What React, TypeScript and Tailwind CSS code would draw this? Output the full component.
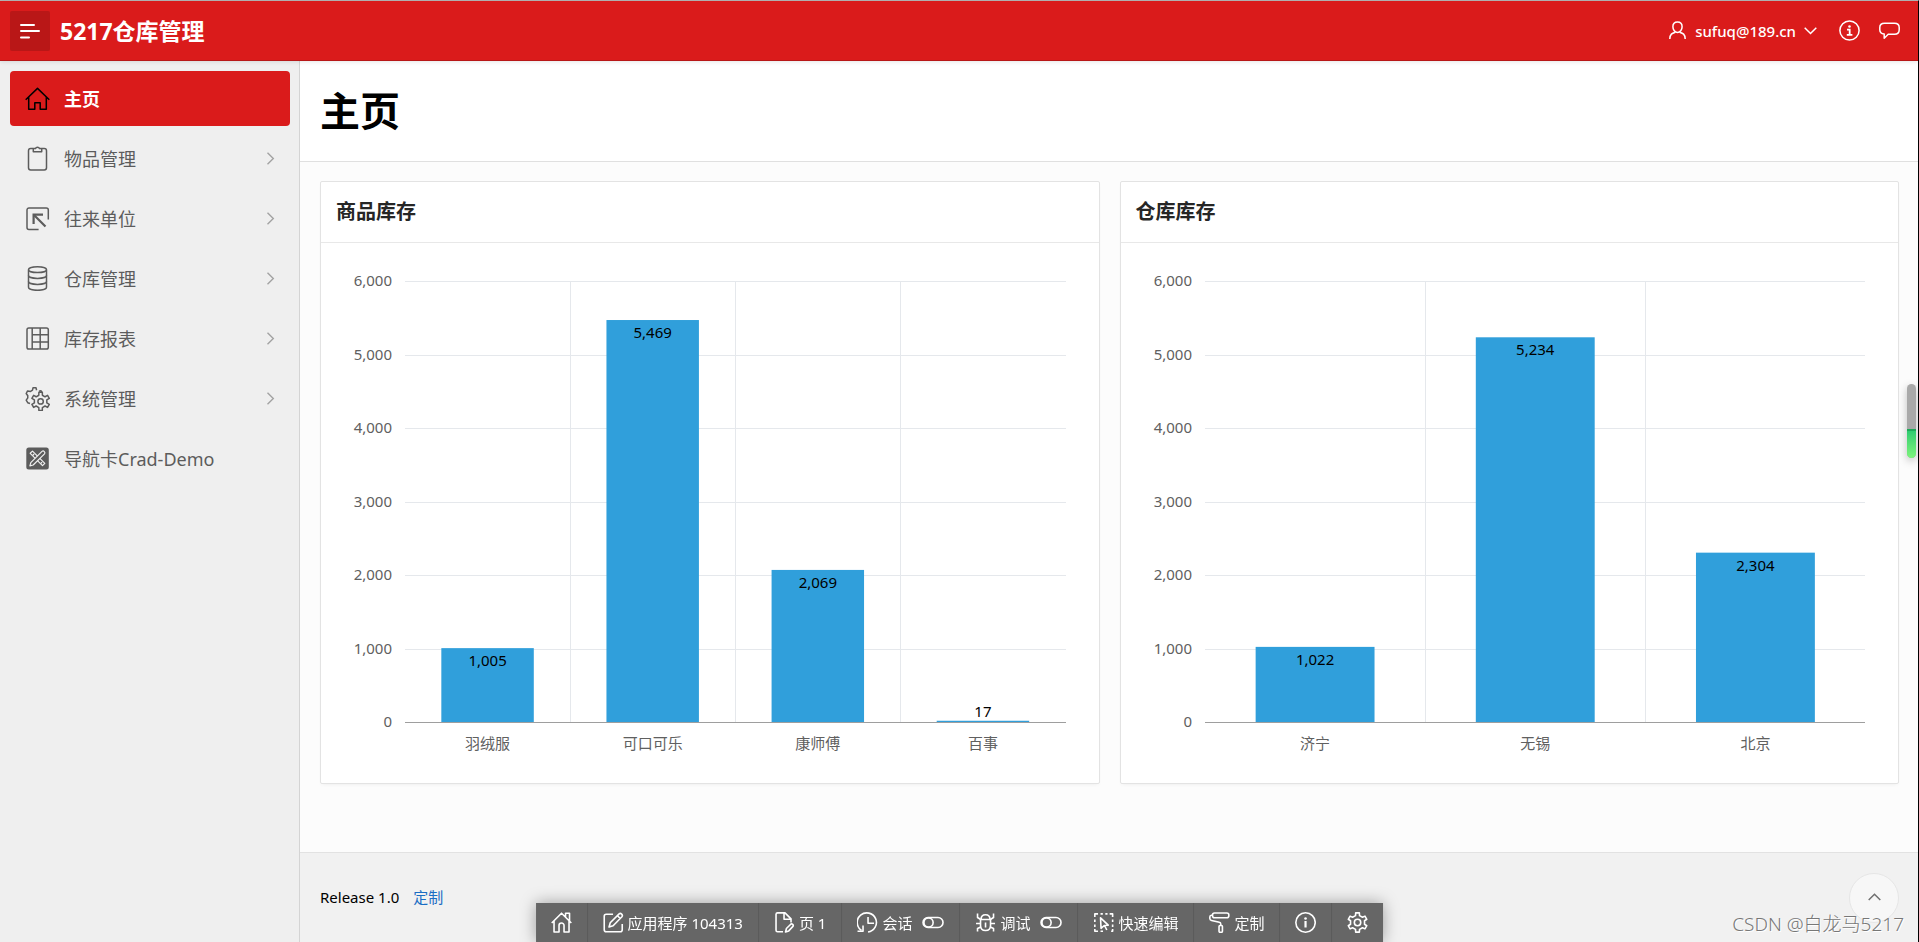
import type { ReactNode } from 'react';
import clsx from 'clsx';

interface ChartItem {
  label: string;
  value: number;
}

interface NavItem {
  label: string;
  icon: ReactNode;
  active?: boolean;
  expandable?: boolean;
}

// Outline of a cog: every tooth is a small trapezoid on the body circle
function gearPath(cx: number, cy: number, outer: number, inner: number, teeth: number) {
  const step = (Math.PI * 2) / teeth;
  const point = (r: number, a: number) =>
    `${(cx + r * Math.sin(a)).toFixed(2)} ${(cy - r * Math.cos(a)).toFixed(2)}`;
  let d = '';
  for (let i = 0; i < teeth; i++) {
    const a = i * step;
    d += `${i === 0 ? 'M' : 'L'}${point(inner, a - step * 0.27)}`;
    d += `L${point(outer, a - step * 0.18)}`;
    d += `L${point(outer, a + step * 0.18)}`;
    d += `L${point(inner, a + step * 0.27)}`;
  }
  return d + 'Z';
}

function NavIcon({ children }: { children: ReactNode }) {
  return (
    <svg
      className="h-[25px] w-[25px]"
      viewBox="0 0 25 25"
      fill="none"
      stroke="currentColor"
      strokeWidth="1.5"
      strokeLinejoin="round"
      aria-hidden="true"
    >
      {children}
    </svg>
  );
}

function ToolIcon({ children }: { children: ReactNode }) {
  return (
    <svg
      className="h-[21px] w-[21px] shrink-0"
      viewBox="0 0 21 21"
      fill="none"
      stroke="currentColor"
      strokeWidth="1.6"
      strokeLinejoin="round"
      aria-hidden="true"
    >
      {children}
    </svg>
  );
}

function ToggleIcon() {
  return (
    <svg
      className="ml-[6px] h-[21px] w-[22px] shrink-0"
      viewBox="0 0 22 21"
      fill="none"
      stroke="currentColor"
      strokeWidth="1.6"
      aria-hidden="true"
    >
      <rect x="1" y="5.5" width="20" height="10" rx="5" />
      <circle cx="6.5" cy="10.5" r="4.6" />
    </svg>
  );
}

const navItems: NavItem[] = [
  {
    label: '主页',
    active: true,
    icon: (
      <NavIcon>
        <path d="M.7 13.8 12.5 2.4l11.8 11.4M3.7 11v12.3h6.1v-6.6h5.4v6.6h6.1V11" />
      </NavIcon>
    ),
  },
  {
    label: '物品管理',
    expandable: true,
    icon: (
      <NavIcon>
        <path d="M8 2.6H5.7a2.2 2.2 0 0 0-2.2 2.2v17a2.2 2.2 0 0 0 2.2 2.2h13.6a2.2 2.2 0 0 0 2.2-2.2v-17a2.2 2.2 0 0 0-2.2-2.2H17" />
        <path d="M8.3 2.6h2.2a2.1 2.1 0 0 1 4 0h2.2v3.2H8.3z" />
      </NavIcon>
    ),
  },
  {
    label: '往来单位',
    expandable: true,
    icon: (
      <NavIcon>
        <path d="M13.6 23.4H4a2 2 0 0 1-2-2V3.9a2 2 0 0 1 2-2h17.3a2 2 0 0 1 2 2v9.6" />
        <path d="M8.6 18V8.7H18" strokeWidth="2.2" strokeLinejoin="miter" />
        <path d="m9 9 11.5 11.5" strokeWidth="2.2" />
      </NavIcon>
    ),
  },
  {
    label: '仓库管理',
    expandable: true,
    icon: (
      <NavIcon>
        <ellipse cx="12.5" cy="3.7" rx="9" ry="2.9" />
        <path d="M3.5 3.7v17.6c0 1.7 4 3 9 3s9-1.3 9-3V3.7" />
        <path d="M3.5 9.4c0 1.7 4 3 9 3s9-1.3 9-3M3.5 15.4c0 1.7 4 3 9 3s9-1.3 9-3" />
      </NavIcon>
    ),
  },
  {
    label: '库存报表',
    expandable: true,
    icon: (
      <NavIcon>
        <rect x="2" y="2" width="21.3" height="21" rx="1.8" />
        <path d="M7.2 2v21M15.2 2v21M7.2 8.7h16M7.2 16h16" />
      </NavIcon>
    ),
  },
  {
    label: '系统管理',
    expandable: true,
    icon: (
      <NavIcon>
        <path d={gearPath(15.6, 15.4, 9.2, 6.4, 6)} />
        <circle cx="15.6" cy="15.4" r="2.7" />
        <path d="M5 17.5l-2.3-.8-1.5-2.5 1.6-2.4a7 7 0 0 1 0-2L1.2 7.5l1.4-2.6 3 .5 1.9-1.2.5-2.4h3l.6 2.5" />
        <path d="m14 5.3 1.9-.6 1 1.3" />
      </NavIcon>
    ),
  },
  {
    label: '导航卡Crad-Demo',
    icon: (
      <NavIcon>
        <rect x="1.3" y="1.5" width="22.5" height="22" rx="2.5" fill="currentColor" stroke="none" />
        <g stroke="#efefef" strokeWidth="1.2">
          <path d="m5.2 7.3 2.3-2.2 12.3 12.3-2.3 2.3z" />
          <path d="m4.9 19.9.9-3.3L17 5.4c1.5-1.3 3.8.9 2.5 2.5L8.2 19z" fill="#5c5c5c" />
          <path d="m7.6 9.5 1.5-1.5M15.6 17.6l1.5-1.5" />
        </g>
      </NavIcon>
    ),
  },
];

const productStock: ChartItem[] = [
  { label: '羽绒服', value: 1005 },
  { label: '可口可乐', value: 5469 },
  { label: '康师傅', value: 2069 },
  { label: '百事', value: 17 },
];

const warehouseStock: ChartItem[] = [
  { label: '济宁', value: 1022 },
  { label: '无锡', value: 5234 },
  { label: '北京', value: 2304 },
];

const TICKS = [0, 1000, 2000, 3000, 4000, 5000, 6000];
const BASE_Y = 479;
const PLOT_H = 441;

const valueY = (value: number) => BASE_Y - (value / 6000) * PLOT_H;
// Grid lines and their labels snap to whole pixels
const tickY = (value: number) => Math.round(valueY(value));

function BarChart({ items, barRatio }: { items: ChartItem[]; barRatio: number }) {
  const slot = 100 / items.length;

  return (
    <div className="flex h-[540px] pr-[33px] text-[15px]">
      <svg className="h-full w-[84px] shrink-0" aria-hidden="true">
        {TICKS.map((tick) => (
          <text key={tick} x="71" y={tickY(tick) + 5} textAnchor="end" className="fill-[#606060]">
            {tick.toLocaleString('en-US')}
          </text>
        ))}
      </svg>
      <svg className="h-full min-w-0 flex-1" role="img">
        <g className="fill-[#e5e8ec]" shapeRendering="crispEdges">
          {TICKS.slice(1).map((tick) => (
            <rect key={tick} x="0" y={tickY(tick)} width="100%" height="1" />
          ))}
          {items.slice(1).map((item, i) => (
            <rect key={item.label} x={`${slot * (i + 1)}%`} y={BASE_Y - PLOT_H} width="1" height={PLOT_H} />
          ))}
        </g>
        {items.map((item, i) => {
          const center = slot * (i + 0.5);
          const top = valueY(item.value);
          const inside = BASE_Y - top > 20;
          return (
            <g key={item.label}>
              <rect
                x={`${center - (slot * barRatio) / 2}%`}
                y={top}
                width={`${slot * barRatio}%`}
                height={BASE_Y - top}
                className="fill-[#309fdb]"
              />
              <text x={`${center}%`} y={inside ? top + 18 : top - 4} textAnchor="middle" className="fill-black">
                {item.value.toLocaleString('en-US')}
              </text>
              <text x={`${center}%`} y={BASE_Y + 27} textAnchor="middle" className="fill-[#606060]">
                {item.label}
              </text>
            </g>
          );
        })}
        <rect x="0" y={BASE_Y} width="100%" height="1" className="fill-[#9e9e9e]" shapeRendering="crispEdges" />
      </svg>
    </div>
  );
}

function ChartCard({ title, items, barRatio }: { title: string; items: ChartItem[]; barRatio: number }) {
  return (
    <section className="min-w-0 rounded-xs border border-[#e3e3e3] bg-white shadow-[0_2px_4px_-2px_rgba(0,0,0,0.08)]">
      <h2 className="border-b border-[#e8e8e8] px-[15px] py-4 text-xl leading-7 font-bold text-[#262626]">{title}</h2>
      <BarChart items={items} barRatio={barRatio} />
    </section>
  );
}

function Header() {
  return (
    <header className="z-10 flex h-[60px] shrink-0 items-center border-b border-[#b81717] bg-[#da1b1b] pr-[18px] pl-[10px] text-white shadow-[0_1px_4px_rgba(0,0,0,0.1)]">
      <button
        type="button"
        aria-label="导航"
        className="flex h-10 w-10 items-center justify-center rounded-xs bg-[#b91717]"
      >
        <svg
          className="h-5 w-5"
          viewBox="0 0 20 20"
          fill="none"
          stroke="currentColor"
          strokeLinecap="round"
          strokeWidth="2"
          aria-hidden="true"
        >
          <path d="M1 4h13M1 10h18M1 16.5h8" />
        </svg>
      </button>
      <a href="#" className="ml-[10px] text-[23px] leading-8 font-bold">
        5217仓库管理
      </a>
      <div className="ml-auto flex items-center">
        <button type="button" className="flex items-center text-[15px] leading-5 font-medium">
          <svg
            className="mr-[9px] h-[19px] w-[17px]"
            viewBox="0 0 17 19"
            fill="none"
            stroke="currentColor"
            strokeWidth="1.5"
            aria-hidden="true"
          >
            <path d="M8.5 1c2.9 0 4.6 2 4.6 4.8 0 3-2 5.6-4.6 5.6S3.9 8.8 3.9 5.8C3.9 3 5.600 1 8.500 1Z" />
            <path d="M6.300 11.200C3 12.300 1 13 .8 18M10.700 11.200c3.300 1.100 5.300 1.800 5.500 6.800" />
          </svg>
          sufuq@189.cn
          <svg
            className="ml-2 h-[13px] w-[13px]"
            viewBox="0 0 13 13"
            fill="none"
            stroke="currentColor"
            strokeWidth="1.5"
            aria-hidden="true"
          >
            <path d="m.7 3.7 5.8 5.8 5.8-5.8" />
          </svg>
        </button>
        <button type="button" aria-label="关于" className="ml-[22px]">
          <svg
            className="h-[21px] w-[21px]"
            viewBox="0 0 21 21"
            fill="none"
            stroke="currentColor"
            strokeWidth="1.5"
            aria-hidden="true"
          >
            <circle cx="10.5" cy="10.5" r="9.6" />
            <circle cx="10.5" cy="6.5" r="1.3" fill="currentColor" stroke="none" />
            <path d="M8 9.7h2.7v5.1M7.8 14.9h5.6" strokeWidth="1.8" />
          </svg>
        </button>
        <button type="button" aria-label="反馈" className="ml-[19px]">
          <svg
            className="h-[21px] w-[21px]"
            viewBox="0 0 21 21"
            fill="none"
            stroke="currentColor"
            strokeWidth="1.5"
            strokeLinejoin="round"
            aria-hidden="true"
          >
            <path d="M5.5 3.2h10c3 0 4.700 1.600 4.700 4.300v2.200c0 2.900-1.800 4.500-4.700 4.500H9.200l-4 4V14C2.500 13.600.8 12.200.8 9.700V7.500c0-2.700 1.700-4.300 4.700-4.300Z" />
          </svg>
        </button>
      </div>
    </header>
  );
}

function Sidebar() {
  return (
    <nav className="w-[300px] shrink-0 border-r border-[#d4d4d4] bg-[#efefef] pt-2 pr-[9px] pl-[10px]">
      <ul>
        {navItems.map((item) => (
          <li key={item.label} className="pt-[2px] pb-[3px]">
            <a
              href="#"
              className={clsx(
                'flex h-[55px] items-center rounded-sm pr-[13px] pl-[15px] text-lg',
                item.active ? 'bg-[#da1b1b] font-bold text-white' : 'text-[#5c5c5c]'
              )}
            >
              <span className={clsx(item.active && 'text-black')}>{item.icon}</span>
              <span className="ml-[14px] flex-1">{item.label}</span>
              {item.expandable && (
                <svg
                  className="h-[13px] w-[13px]"
                  viewBox="0 0 13 13"
                  fill="none"
                  stroke="#a3a3a3"
                  strokeWidth="1.4"
                  aria-hidden="true"
                >
                  <path d="m3.5.7 5.8 5.8-5.8 5.8" />
                </svg>
              )}
            </a>
          </li>
        ))}
      </ul>
    </nav>
  );
}

interface ToolButtonProps {
  icon: ReactNode;
  label?: string;
  name?: string;
  toggle?: boolean;
}

function ToolButton({ icon, label, name, toggle }: ToolButtonProps) {
  return (
    <li className="border-r border-[#5b5b5b] last:border-r-0">
      <button type="button" aria-label={name} className="flex h-full items-center gap-1 px-[15px] whitespace-nowrap">
        {icon}
        {label}
        {toggle && <ToggleIcon />}
      </button>
    </li>
  );
}

function DeveloperToolbar() {
  return (
    <ul className="fixed bottom-0 left-1/2 z-20 flex h-[39px] -translate-x-1/2 bg-[#666] text-[15px] leading-5 text-white shadow-[0_0_16px_rgba(0,0,0,0.35)]">
      <ToolButton
        name="首页"
        icon={
          <ToolIcon>
            <path d="M.7 11 10.5 1.2 20.3 11M3 9v11h5v-6.5a2.5 2.5 0 0 1 5 0V20h5V9M14.5 4.8V1.2h4V9" />
          </ToolIcon>
        }
      />
      <ToolButton
        label="应用程序 104313"
        icon={
          <ToolIcon>
            <path d="M10 2.3H3.2a2 2 0 0 0-2 2v13.5a2 2 0 0 0 2 2h14a2 2 0 0 0 2-2V12" />
            <path d="m6 15 1.2-4.2 8.9-8.9c1.600-1.400 4.200 1.100 2.800 2.800l-8.800 9zM14.500 3.800l2.700 2.700" />
          </ToolIcon>
        }
      />
      <ToolButton
        label="页 1"
        icon={
          <ToolIcon>
            <path d="M9 19.8H3.5a1.5 1.5 0 0 1-1.5-1.5v-16A1.5 1.5 0 0 1 3.5.9H11l6 6v3.5M10 1.5v5.8h6.5" />
            <path d="m11.5 20 .9-3.5 4.300-4.300c1.200-1 3.200.9 2.200 2.200l-4.200 4.500z" />
          </ToolIcon>
        }
      />
      <ToolButton
        label="会话"
        toggle
        icon={
          <ToolIcon>
            <path d="M4.5 18.5a9.6 9.6 0 1 1 6.5 1.5M11 5v6.2h6" />
            <path d="M6 13.5v5.800H.5" />
          </ToolIcon>
        }
      />
      <ToolButton
        label="调试"
        toggle
        icon={
          <ToolIcon>
            <path d="M6 7.5c0-3 1.8-4.7 4.5-4.7S15 4.5 15 7.5M5.5 7.5h10v6c0 3-2 5-5 5s-5-2-5-5zM10.5 10.5v5" />
            <path d="M2.5 1.5v4l3.2 2M18.5 1.5v4l-3.2 2M1 11.5h4.5M15.5 11.5H20M2.5 19.5v-3l3.2-1.500M18.5 19.5v-3L15.3 15" />
          </ToolIcon>
        }
      />
      <ToolButton
        label="快速编辑"
        icon={
          <ToolIcon>
            <path d="M1.8 5V1.9H5M7.5 1.9h2.300M12.300 1.900h2.200M16.600 1.900h3V5M19.600 7.500v2.500M19.600 12.500V15M19.600 17v2.200h-1.500M1.800 7.500v2.500M1.800 12.500V15M1.800 17v2.200H5M7.500 19.200H10" />
            <path d="m7.500 5.800 7.700 7.400-4 .3-3.200 2.800zM11.500 13.500l2.300 4.500" />
          </ToolIcon>
        }
      />
      <ToolButton
        label="定制"
        icon={
          <ToolIcon>
            <rect x="3.5" y="1" width="16.3" height="4.8" rx="2" />
            <path d="M3.5 3.300H2.300C1.300 3.300.8 4 .8 5v1.500c0 1.200.7 1.800 1.700 2l7.800 1.800c1 .2 1.400.8 1.400 1.700v1.800" />
            <rect x="10" y="13.5" width="3.4" height="6.8" rx="1" />
          </ToolIcon>
        }
      />
      <ToolButton
        name="信息"
        icon={
          <ToolIcon>
            <circle cx="10.5" cy="10.5" r="9.7" />
            <circle cx="10.5" cy="6.5" r="1.3" fill="currentColor" stroke="none" />
            <path d="M10.5 9v6.5" strokeWidth="2.2" />
          </ToolIcon>
        }
      />
      <ToolButton
        name="设置"
        icon={
          <ToolIcon>
            <path d={gearPath(10.5, 10.5, 9.8, 7.2, 6)} />
            <circle cx="10.5" cy="10.5" r="3.2" />
          </ToolIcon>
        }
      />
    </ul>
  );
}

export default function App() {
  return (
    <div className="relative flex min-h-screen flex-col border-t border-r border-t-[#b5b5b5] border-r-black bg-[#fcfcfc] font-['Noto_Sans','Noto_Sans_CJK_SC',sans-serif]">
      <Header />
      <div className="flex flex-1">
        <Sidebar />
        <div className="flex min-w-0 flex-1 flex-col">
          <div className="border-b border-[#e0e0e0] bg-white px-5 py-[25px]">
            <h1 className="text-[40px] leading-[50px] font-bold text-black">主页</h1>
          </div>
          <main className="grid flex-1 grid-cols-2 content-start gap-5 pt-[19px] pr-[19px] pl-5">
            <ChartCard title="商品库存" items={productStock} barRatio={0.56} />
            <ChartCard title="仓库库存" items={warehouseStock} barRatio={0.54} />
          </main>
          <footer className="flex h-[90px] items-center border-t border-[#e2e2e2] bg-[#f1f1f1] pr-[19px] pl-5 text-[15px] text-black">
            <span>Release 1.0</span>
            <a href="#" className="ml-[14px] text-[#1a6dc4]">
              定制
            </a>
            <a
              href="#"
              aria-label="返回顶部"
              className="ml-auto flex h-[50px] w-[50px] items-center justify-center rounded-full border border-[#e6e6e6] bg-[#f7f7f7] text-[#707070]"
            >
              <svg
                className="h-[13px] w-[13px]"
                viewBox="0 0 13 13"
                fill="none"
                stroke="currentColor"
                strokeWidth="1.5"
                aria-hidden="true"
              >
                <path d="m.7 9 5.8-5.8L12.3 9" />
              </svg>
            </a>
          </footer>
        </div>
      </div>

      {/* Floating scroll meter on the right edge */}
      <div className="absolute top-[383px] right-[2px] flex h-[74px] w-[9px] flex-col overflow-hidden rounded-full bg-[#a9a9a9] shadow-[0_3px_8px_rgba(0,0,0,0.25)]">
        <div className="mt-auto h-[29px] border-t-2 border-[#1faa59] bg-linear-to-b from-[#2ecc71] to-[#7cf57c]" />
      </div>

      <DeveloperToolbar />

      <p className="pointer-events-none absolute right-[14px] bottom-1 z-30 font-['Noto_Sans','Noto_Sans_CJK_SC',sans-serif] text-[19px] leading-7 font-light text-[#777] [text-shadow:1px_1px_0_#fff]">
        CSDN @白龙马5217
      </p>
    </div>
  );
}
